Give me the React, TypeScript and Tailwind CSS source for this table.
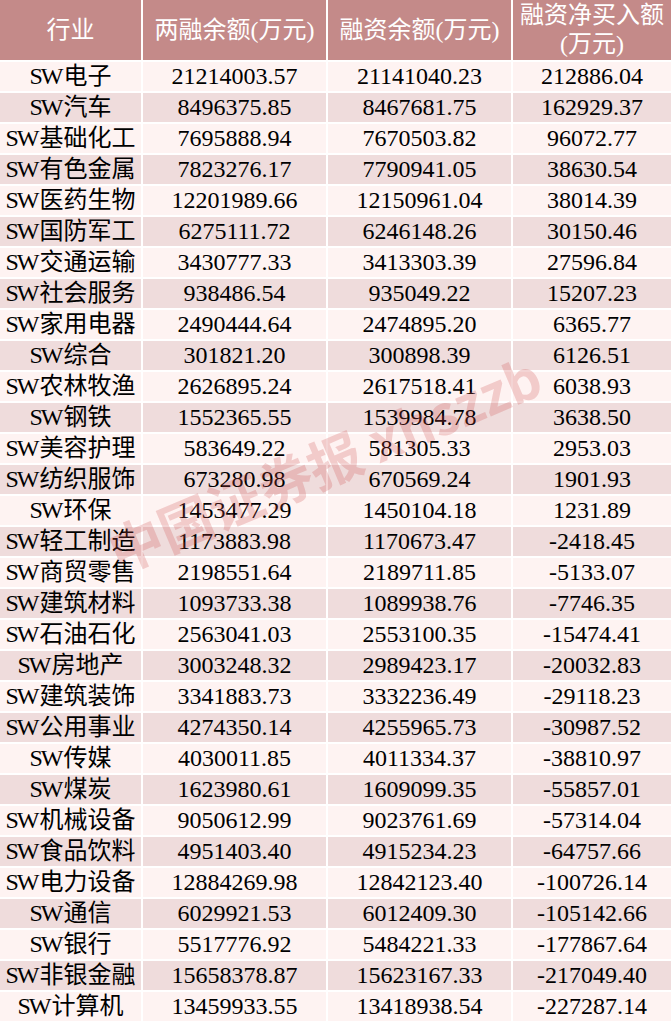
import React from "react";

const rows: [string, string, string, string][] = [
  ["电子", "21214003.57", "21141040.23", "212886.04"],
  ["汽车", "8496375.85", "8467681.75", "162929.37"],
  ["基础化工", "7695888.94", "7670503.82", "96072.77"],
  ["有色金属", "7823276.17", "7790941.05", "38630.54"],
  ["医药生物", "12201989.66", "12150961.04", "38014.39"],
  ["国防军工", "6275111.72", "6246148.26", "30150.46"],
  ["交通运输", "3430777.33", "3413303.39", "27596.84"],
  ["社会服务", "938486.54", "935049.22", "15207.23"],
  ["家用电器", "2490444.64", "2474895.20", "6365.77"],
  ["综合", "301821.20", "300898.39", "6126.51"],
  ["农林牧渔", "2626895.24", "2617518.41", "6038.93"],
  ["钢铁", "1552365.55", "1539984.78", "3638.50"],
  ["美容护理", "583649.22", "581305.33", "2953.03"],
  ["纺织服饰", "673280.98", "670569.24", "1901.93"],
  ["环保", "1453477.29", "1450104.18", "1231.89"],
  ["轻工制造", "1173883.98", "1170673.47", "-2418.45"],
  ["商贸零售", "2198551.64", "2189711.85", "-5133.07"],
  ["建筑材料", "1093733.38", "1089938.76", "-7746.35"],
  ["石油石化", "2563041.03", "2553100.35", "-15474.41"],
  ["房地产", "3003248.32", "2989423.17", "-20032.83"],
  ["建筑装饰", "3341883.73", "3332236.49", "-29118.23"],
  ["公用事业", "4274350.14", "4255965.73", "-30987.52"],
  ["传媒", "4030011.85", "4011334.37", "-38810.97"],
  ["煤炭", "1623980.61", "1609099.35", "-55857.01"],
  ["机械设备", "9050612.99", "9023761.69", "-57314.04"],
  ["食品饮料", "4951403.40", "4915234.23", "-64757.66"],
  ["电力设备", "12884269.98", "12842123.40", "-100726.14"],
  ["通信", "6029921.53", "6012409.30", "-105142.66"],
  ["银行", "5517776.92", "5484221.33", "-177867.64"],
  ["非银金融", "15658378.87", "15623167.33", "-217049.40"],
  ["计算机", "13459933.55", "13418938.54", "-227287.14"],
];

const font = { fontFamily: '"Liberation Serif", "Noto Sans CJK SC", serif' };

export default function App() {
  return (
    <div className="relative w-[671px] h-[1022px] overflow-hidden bg-white" style={font}>
      <div className="grid grid-cols-[141px_183px_183px_158px] gap-[2px] bg-white">
        <div className="h-[60px] bg-[#c48a89] text-white text-[24px] flex items-center justify-center">行业</div>
        <div className="h-[60px] bg-[#c48a89] text-white text-[24px] flex items-center justify-center whitespace-nowrap">两融余额(万元)</div>
        <div className="h-[60px] bg-[#c48a89] text-white text-[24px] flex items-center justify-center whitespace-nowrap">融资余额(万元)</div>
        <div className="h-[60px] bg-[#c48a89] text-white text-[24px] leading-[29px] flex flex-col items-center justify-center whitespace-nowrap">
          <span>融资净买入额</span>
          <span>(万元)</span>
        </div>
        {rows.map((r, i) => {
          const bg = i % 2 === 0 ? "bg-[#fef3f2]" : "bg-[#efdcdc]";
          return (
            <React.Fragment key={r[0]}>
              <div className={`${bg} h-[29px] leading-[29px] flex items-center justify-center text-[24px] text-black whitespace-nowrap`}>
                <span className="tracking-[-2px] mr-[2px]">SW</span>
                <span>{r[0]}</span>
              </div>
              <div className={`${bg} h-[29px] leading-[29px] flex items-center justify-center text-[24px] text-black`}>{r[1]}</div>
              <div className={`${bg} h-[29px] leading-[29px] flex items-center justify-center text-[24px] text-black`}>{r[2]}</div>
              <div className={`${bg} h-[29px] leading-[29px] flex items-center justify-center text-[24px] text-black`}>{r[3]}</div>
            </React.Fragment>
          );
        })}
      </div>
      <div
        className="absolute left-[92px] top-[430px] w-[460px] h-[66px] leading-[66px] -rotate-[23deg] origin-center whitespace-nowrap text-[54px] font-bold text-[rgba(205,75,75,0.24)] pointer-events-none"
        style={{ fontFamily: '"Noto Sans CJK SC", "Liberation Sans", sans-serif' }}
      >
        中国证券报 xhszzb
      </div>
    </div>
  );
}
